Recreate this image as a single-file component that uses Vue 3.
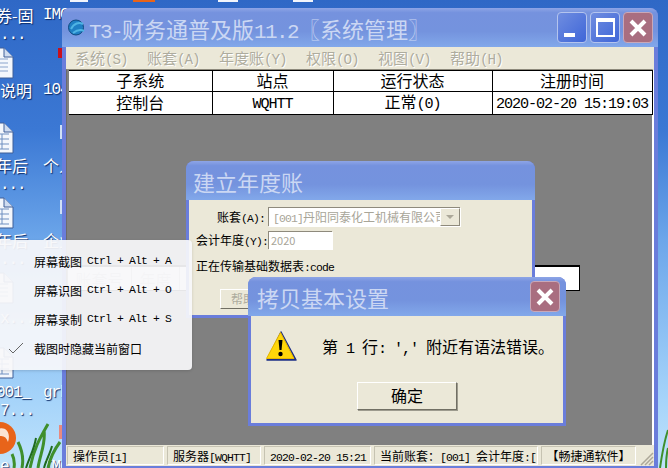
<template>
    <div class="desktop">
        <!-- desktop icons and captions, mostly cut off by the main window -->
        <div v-for="(s, i) in topStubs" :key="'s' + i" class="top-stub"
            :style="{ left: s.x + 'px', width: s.w + 'px', background: s.c }"></div>
        <svg v-for="(d, i) in docIcons" :key="'d' + i" class="doc" :style="{ left: d.x + 'px', top: d.y + 'px' }"
            width="30" height="32" viewBox="0 0 30 32">
            <path d="M1 1H20L29 10V31H1Z" fill="#f4f7fc" stroke="#3f5f98" />
            <path d="M20 1V10H29" fill="#cfdcf0" stroke="#3f5f98" />
            <path v-if="d.sheet" d="M5 12H25M5 17H25M5 22H25M5 27H25M11 12V27M18 12V27" stroke="#6f8fc0" fill="none" />
            <path v-else d="M5 12H24M5 16H24M5 20H24M5 24H24" stroke="#8aa4cc" fill="none" />
        </svg>
        <div v-for="(l, i) in labels" :key="'l' + i" class="label" :class="{ lat: l.lat }"
            :style="{ left: l.x + 'px', top: l.y + 'px' }">
            {{ l.text }}
        </div>
        <div class="stub" style="left: 58px; top: 48px; background: #c8101c"></div>
        <div class="stub" style="left: 60px; top: 125px; height: 14px; background: #cfe0f6"></div>
        <div class="stub" style="left: 60px; top: 200px; height: 14px; background: #cfe0f6"></div>
        <div class="stub" style="left: 59px; top: 425px; height: 14px; background: #e88a80"></div>
        <svg class="grass" width="668" height="60" viewBox="0 0 668 60">
            <circle cx="0" cy="30" r="16" fill="#e8641a" />
            <path d="M-6 24C2 16 12 22 8 34C6 28 2 26 -6 30" fill="#fbe4d4" />
            <path d="M30 60C34 40 40 30 48 16M38 60C40 46 46 36 44 22M22 60C24 50 22 42 18 34M48 60C50 50 54 42 60 34M14 60C15 54 14 50 12 46"
                fill="none" stroke="#3f8f2c" stroke-width="3" />
            <path d="M26 60C30 48 34 42 36 30M44 60C46 52 50 46 52 38" fill="none" stroke="#1f6a1e" stroke-width="2" />
            <path d="M660 60C662 46 664 34 668 22M666 60C666 50 667 44 668 40" fill="none" stroke="#3f8f2c"
                stroke-width="2" />
        </svg>

        <!-- main window -->
        <div class="window main">
            <div class="titlebar">
                <svg class="logo" width="17" height="17" viewBox="0 0 17 17">
                    <circle cx="8" cy="8.5" r="7.5" fill="#1f7fc4" stroke="#0e4a80" />
                    <path d="M3 10C6 4 11 3 15 5M5 14C9 11 12 10 16 12" fill="none" stroke="#4fb4e4" stroke-width="2" />
                </svg>
                <span class="main-title"><span class="m">T3-</span>财务通普及版<span class="m">11.2</span>〖系统管理〗</span>
                <div class="caption-btns">
                    <div class="cap-btn"><i class="min-bar"></i></div>
                    <div class="cap-btn"><i class="max-box"></i></div>
                    <div class="cap-btn close">
                        <svg width="20" height="20" viewBox="0 0 20 20">
                            <path d="M3 3L17 17M17 3L3 17" stroke="#fff" stroke-width="4" />
                        </svg>
                    </div>
                </div>
            </div>
            <div class="menubar">
                <span v-for="m in menus" :key="m[0]">{{ m[0] }}<span class="m">({{ m[1] }})</span></span>
            </div>
            <div class="content">
                <table class="sessions">
                    <colgroup>
                        <col style="width: 143px" />
                        <col style="width: 121px" />
                        <col style="width: 159px" />
                        <col style="width: 160px" />
                    </colgroup>
                    <tbody>
                        <tr>
                            <td>子系统</td>
                            <td>站点</td>
                            <td>运行状态</td>
                            <td>注册时间</td>
                        </tr>
                        <tr>
                            <td>控制台</td>
                            <td><span class="m">WQHTT</span></td>
                            <td>正常<span class="m">(0)</span></td>
                            <td><span class="m">2020-02-20 15:19:03</span></td>
                        </tr>
                    </tbody>
                </table>
            </div>
            <div class="statusbar">
                <div class="panel" style="width: 97px">操作员<span class="m">[1]</span></div>
                <div class="panel" style="width: 94px">服务器<span class="m">[WQHTT]</span></div>
                <div class="panel" style="width: 107px"><span class="m">2020-02-20 15:21</span></div>
                <div class="panel" style="width: 164px">当前账套：<span class="m">[001] </span>会计年度<span class="m">:[</span></div>
                <div class="panel center" style="width: 95px">【畅捷通软件】</div>
                <svg class="grip" width="14" height="14" viewBox="0 0 14 14">
                    <path d="M1 13L13 1M5 13L13 5M9 13L13 9" stroke="#aca899" stroke-width="1.5" />
                </svg>
            </div>
        </div>

        <!-- year list behind the dialogs -->
        <div class="year-list">
            <div class="year-cell" style="width: 64px">账套号</div>
            <div class="year-cell" style="width: 48px">年度</div>
        </div>

        <!-- create year dialog -->
        <div class="window year-dialog">
            <div class="titlebar small">
                <span class="dialog-title">建立年度账</span>
            </div>
            <div class="dialog-body">
                <div class="form-row">
                    <label class="form-label">账套<span class="m">(A):</span></label>
                    <div class="combo">
                        <span class="combo-text"><span class="m">[001]</span>丹阳同泰化工机械有限公司</span>
                        <span class="combo-arrow"><i></i></span>
                    </div>
                </div>
                <div class="form-row">
                    <label class="form-label">会计年度<span class="m">(Y):</span></label>
                    <div class="year-input">2020</div>
                </div>
                <div class="progress-text">正在传输基础数据表<span class="m">:code</span></div>
                <div class="help-btn">帮助</div>
            </div>
        </div>

        <!-- error message box -->
        <div class="window alert">
            <div class="titlebar small">
                <span class="dialog-title alert-title">拷贝基本设置</span>
                <div class="cap-btn close alert-close">
                    <svg width="20" height="20" viewBox="0 0 20 20">
                        <path d="M3 3L17 17M17 3L3 17" stroke="#fff" stroke-width="4" />
                    </svg>
                </div>
            </div>
            <div class="alert-body">
                <div class="alert-msg">
                    <svg width="32" height="32" viewBox="0 0 32 32">
                        <path d="M16 2L31 30H2Z" fill="#1d2f86" stroke="#1d2f86" stroke-linejoin="round" stroke-width="1.5" />
                        <path d="M15.5 2.5L29 28.5H1.5Z" fill="#ffd60a" stroke="#e8b800" stroke-linejoin="round" />
                        <path d="M13.5 10H17.5L16.5 20H14.5Z" fill="#000" />
                        <circle cx="15.5" cy="24" r="2.2" fill="#000" />
                    </svg>
                    <span class="alert-text">第<span class="m"> 1 </span>行<span class="m">: ',' </span>附近有语法错误。</span>
                </div>
                <div class="ok-btn">确定</div>
            </div>
        </div>

        <!-- screenshot tool popup menu -->
        <div class="popup">
            <div v-for="p in popupItems" :key="p.text" class="popup-item">
                <svg v-if="p.checked" class="check" width="16" height="12" viewBox="0 0 16 12">
                    <path d="M1 7L5 11L15 1" fill="none" stroke="#666" />
                </svg>
                <span>{{ p.text }}</span>
                <span v-if="p.keys" class="m keys">{{ p.keys }}</span>
            </div>
        </div>
    </div>
</template>

<script setup>
const menus = [
    ['系统', 'S'],
    ['账套', 'A'],
    ['年度账', 'Y'],
    ['权限', 'O'],
    ['视图', 'V'],
    ['帮助', 'H'],
];

const popupItems = [
    { text: '屏幕截图', keys: 'Ctrl + Alt + A' },
    { text: '屏幕识图', keys: 'Ctrl + Alt + O' },
    { text: '屏幕录制', keys: 'Ctrl + Alt + S' },
    { text: '截图时隐藏当前窗口', checked: true },
];

const docIcons = [
    { x: -16, y: 47, sheet: false },
    { x: -16, y: 122, sheet: true },
    { x: -16, y: 197, sheet: true },
    { x: -16, y: 272, sheet: false },
    { x: -16, y: 347, sheet: true },
];

const topStubs = [
    { x: 70, w: 18, c: '#f2f5fb' },
    { x: 133, w: 22, c: '#e8641a' },
    { x: 218, w: 20, c: '#f2f5fb' },
    { x: 293, w: 20, c: '#f2f5fb' },
];

const labels = [
    { x: -4, y: 4, text: '券-固' },
    { x: 43, y: 4, text: 'IMC', lat: true },
    { x: 0, y: 24, text: '...', lat: true },
    { x: 0, y: 79, text: '说明' },
    { x: 43, y: 79, text: '104', lat: true },
    { x: -4, y: 154, text: '年后' },
    { x: 43, y: 154, text: '个人' },
    { x: 0, y: 174, text: '...', lat: true },
    { x: -4, y: 229, text: '年后' },
    { x: 43, y: 229, text: '企业' },
    { x: 0, y: 249, text: '...', lat: true },
    { x: 0, y: 308, text: 'x...', lat: true },
    { x: -4, y: 382, text: '001_', lat: true },
    { x: 43, y: 382, text: 'grb', lat: true },
    { x: 0, y: 400, text: '7...', lat: true },
    { x: 0, y: 456, text: 'e', lat: true },
    { x: 43, y: 456, text: 'IMC', lat: true },
];
</script>

<style>
html,
body {
    margin: 0;
    overflow: hidden;
}
</style>

<style scoped>
.desktop {
    position: relative;
    width: 668px;
    height: 468px;
    overflow: hidden;
    font-family: "Noto Sans CJK SC", "Liberation Sans", sans-serif;
    color: #000;
    background: linear-gradient(180deg, #2f68c6 0, #3b78d4 130px, #6ca6ea 240px, #a6d4fa 400px, #bfe3fb 468px);
}

/* latin text in the old UI font is tall but only half a CJK cell wide */
.m {
    font-family: "Liberation Mono", monospace;
    font-size: 0.95em;
    line-height: 1;
    letter-spacing: -0.074em;
}

.top-stub {
    position: absolute;
    top: 0;
    height: 2px;
}

.doc {
    position: absolute;
}

.label {
    position: absolute;
    font-size: 16px;
    line-height: 22px;
    color: #fff;
    white-space: nowrap;
    text-shadow: 1px 1px 1px #0b2a66;
}

.label.lat {
    font-family: "Liberation Mono", monospace;
    letter-spacing: -0.07em;
}

.stub {
    position: absolute;
    width: 5px;
    height: 10px;
}

.grass {
    position: absolute;
    left: 0;
    bottom: 0;
}

.window {
    position: absolute;
    display: flex;
    flex-direction: column;
    box-sizing: border-box;
    background: #6a7ddb;
    border-radius: 8px 8px 0 0;
}

.main {
    left: 62px;
    top: 8px;
    width: 596px;
    height: 460px;
    padding: 0 4px 2px;
}

.titlebar {
    display: flex;
    align-items: center;
    flex: none;
    height: 39px;
    margin: 0 -4px;
    padding-left: 6px;
    border-radius: 8px 8px 0 0;
    background: linear-gradient(180deg, #8ea5e6 0, #7592de 12%, #7493de 60%, #82a8ea 100%);
}

.titlebar.small {
    margin: 0 -3px;
    padding-left: 7px;
}

.logo {
    flex: none;
}

.main-title {
    margin-left: 4px;
    font-size: 22px;
    line-height: 30px;
    padding-top: 2px;
    color: #cbd7f3;
    white-space: nowrap;
}

.caption-btns {
    display: flex;
    gap: 3px;
    margin-left: auto;
    margin-right: 5px;
}

.cap-btn {
    position: relative;
    display: flex;
    align-items: center;
    justify-content: center;
    box-sizing: border-box;
    width: 30px;
    height: 31px;
    border: 1px solid #b4c4ee;
    border-radius: 4px;
    background: linear-gradient(135deg, #6f8de0, #3f66d8);
}

.cap-btn.close {
    background: #a96e80;
    border-color: #c9a8b8;
}

.min-bar {
    position: absolute;
    left: 6px;
    bottom: 5px;
    width: 11px;
    height: 4px;
    background: #fff;
}

.max-box {
    box-sizing: border-box;
    width: 19px;
    height: 19px;
    border: 2px solid #fff;
    border-top-width: 4px;
}

.menubar {
    display: flex;
    flex: none;
    gap: 19.5px;
    box-sizing: border-box;
    height: 22px;
    padding-left: 9px;
    font-size: 15px;
    line-height: 21px;
    color: #aeac9e;
    background: #ebe8d8;
    text-shadow: 1px 1px 0 #fff;
    white-space: nowrap;
}

.content {
    flex: 1;
    min-height: 0;
    padding-left: 2px;
    background: #808080;
    border-top: 1px solid #8e8a7c;
    border-left: 1px solid #6b6b6b;
    border-right: 2px solid #fff;
}

.sessions {
    width: 583px;
    border-collapse: collapse;
    table-layout: fixed;
    background: #fff;
    font-size: 16px;
    line-height: 18px;
    text-align: center;
    white-space: nowrap;
}

.sessions td {
    height: 21px;
    padding: 0 0 2px;
    box-sizing: border-box;
    border: 1px solid #000;
}

.sessions td:first-child {
    border-left: none;
}

.statusbar {
    display: flex;
    flex: none;
    align-items: center;
    gap: 3px;
    height: 21px;
    padding-left: 1px;
    background: #ebe8d8;
    font-size: 12px;
    white-space: nowrap;
}

.panel {
    flex: none;
    box-sizing: border-box;
    height: 19px;
    padding-left: 5px;
    overflow: hidden;
    line-height: 18px;
    border: 1px solid #c6c3b2;
    border-right-color: #fff;
    border-bottom-color: #fff;
}

.panel.center {
    padding: 0;
    text-align: center;
}

.grip {
    margin-left: auto;
    align-self: flex-end;
}

.year-list {
    position: absolute;
    left: 68px;
    top: 265px;
    display: flex;
    box-sizing: border-box;
    width: 512px;
    height: 26px;
    background: #fff;
    border-top: 2px solid #000;
    border-right: 1px solid #000;
    border-bottom: 1px solid #000;
    font-size: 16px;
    line-height: 24px;
    color: #c8c8c8;
    text-align: center;
}

.year-cell {
    box-sizing: border-box;
    border-right: 1px solid #bbb;
}

.year-dialog {
    left: 186px;
    top: 161px;
    width: 349px;
    height: 157px;
    padding: 0 3px 3px;
}

.dialog-title {
    font-size: 22px;
    line-height: 30px;
    color: #cbd7f3;
    white-space: nowrap;
}

.dialog-body {
    flex: 1;
    display: flex;
    flex-direction: column;
    padding: 7px 0 0 7px;
    background: #ebe8d8;
    font-size: 12px;
}

.form-row {
    display: flex;
    align-items: center;
    margin-bottom: 5px;
}

.form-label {
    box-sizing: border-box;
    width: 72px;
    text-align: right;
    white-space: nowrap;
    padding-right: 3px;
}

.combo {
    display: flex;
    box-sizing: border-box;
    width: 192px;
    height: 19px;
    background: #fff;
    border-top: 1px solid #8e8a7c;
    border-left: 1px solid #8e8a7c;
    box-shadow: 1px 1px 0 #fff;
    font-size: 12px;
    color: #a8a598;
    line-height: 17px;
}

.combo-text {
    flex: 1;
    padding-left: 4px;
    overflow: hidden;
    white-space: nowrap;
}

.combo-arrow {
    display: flex;
    align-items: center;
    justify-content: center;
    flex: none;
    width: 20px;
    background: #ebe8d8;
    border: 1px solid;
    border-color: #fff #8e8a7c #8e8a7c #fff;
    box-sizing: border-box;
}

.combo-arrow i {
    border-top: 4px solid #aca899;
    border-left: 4px solid transparent;
    border-right: 4px solid transparent;
}

.year-input {
    box-sizing: border-box;
    width: 64px;
    height: 18px;
    padding-left: 2px;
    background: #fff;
    border-top: 1px solid #8e8a7c;
    border-left: 1px solid #8e8a7c;
    box-shadow: 1px 1px 0 #fff;
    font-size: 11px;
    line-height: 16px;
    color: #a8a598;
}

.progress-text {
    margin-top: 3px;
    white-space: nowrap;
}

.help-btn {
    box-sizing: border-box;
    width: 60px;
    height: 20px;
    margin: 15px 0 0 24px;
    padding-left: 10px;
    border: 1px solid;
    border-color: #fff #716f64 #716f64 #fff;
    color: #aeac9e;
    line-height: 18px;
}

.alert {
    left: 248px;
    top: 277px;
    width: 318px;
    height: 149px;
    padding: 0 3px 3px;
}

.alert-title {
    margin-left: 2px;
}

.alert-close {
    margin-left: auto;
    margin-right: 6px;
}

.alert-body {
    flex: 1;
    display: flex;
    flex-direction: column;
    align-items: center;
    background: #ebe8d8;
}

.alert-msg {
    display: flex;
    align-items: center;
    align-self: flex-start;
    margin: 14px 0 0 14px;
}

.alert-text {
    margin-left: 25px;
    font-size: 16px;
    white-space: pre;
}

.ok-btn {
    box-sizing: border-box;
    width: 100px;
    height: 28px;
    margin-top: 20px;
    border: 1px solid;
    border-color: #fff #716f64 #716f64 #fff;
    box-shadow: 1px 1px 0 #9d9b8e;
    font-size: 16px;
    line-height: 25px;
    text-align: center;
}

.popup {
    position: absolute;
    left: 0;
    top: 240px;
    display: flex;
    flex-direction: column;
    box-sizing: border-box;
    width: 192px;
    height: 130px;
    padding-top: 7px;
    border-radius: 0 4px 4px 0;
    background: rgba(247, 247, 250, 0.93);
    box-shadow: 0 1px 3px rgba(0, 0, 0, 0.15);
    font-size: 12px;
}

.popup-item {
    position: relative;
    display: flex;
    align-items: center;
    height: 29px;
    padding-left: 34px;
    white-space: nowrap;
}

.keys {
    margin-left: 5px;
}

.check {
    position: absolute;
    left: 8px;
    top: 8px;
}
</style>
